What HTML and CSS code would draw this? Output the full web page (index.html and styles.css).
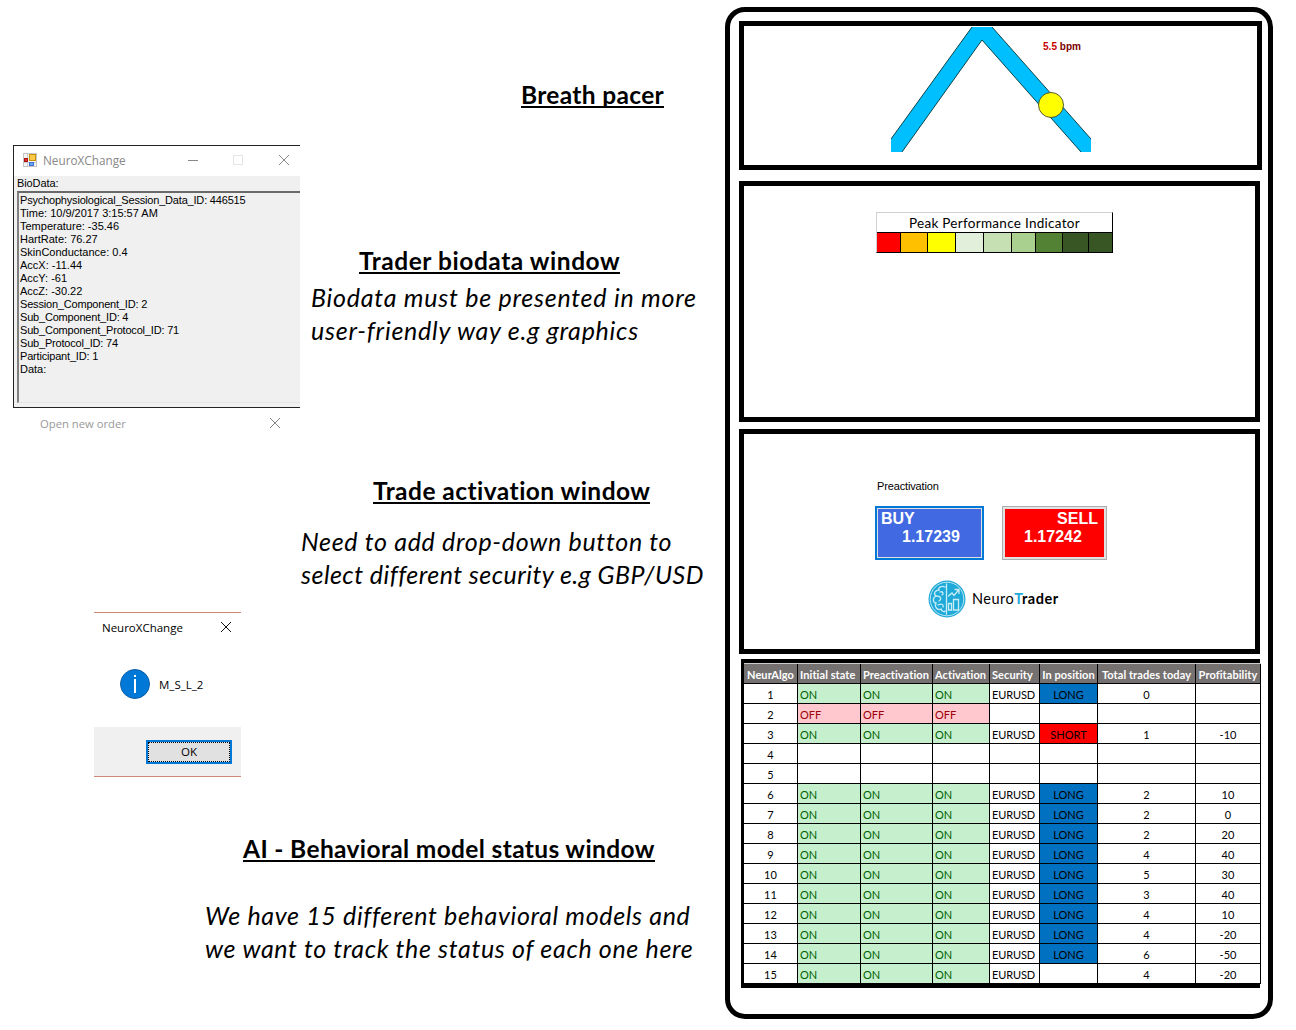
FILE: index.html
```html
<!DOCTYPE html>
<html lang="en">
<head>
<meta charset="utf-8">
<title>NeuroTrader layout</title>
<link rel="stylesheet" href="styles.css">
</head>
<body>
<main class="board">
  <div class="notes">
    <h2 class="title t-breath"><span>Breath pacer</span></h2>

    <section class="bio-row">
      <div class="win">
        <header class="win-bar">
          <svg class="win-icon" width="14" height="14" viewBox="0 0 14 14">
            <rect x="0.5" y="0.5" width="13" height="13" fill="#f4f4f4" stroke="#c4c4c4"/>
            <path d="M4.500 1V13M1 9.500H13" stroke="#ccc"/>
            <rect x="6.500" y="1.500" width="6" height="6" fill="#fdc94a" stroke="#c8920b"/>
            <rect x="1.500" y="5.500" width="3" height="3" fill="#d33" stroke="#a11"/>
            <rect x="6.500" y="9.500" width="4" height="3" fill="#6aa5f5" stroke="#3a72d0"/>
          </svg>
          <span class="win-name">NeuroXChange</span>
          <svg class="win-ctl" width="104" height="12" viewBox="0 0 104 12" fill="none">
            <path d="M1 6.500H11" stroke="#888"/>
            <rect x="46.500" y="1.500" width="9" height="9" stroke="#e4e4e4"/>
            <path d="M92 1L102 11M102 1L92 11" stroke="#888"/>
          </svg>
        </header>
        <div class="bio-label">BioData:</div>
        <div class="bio-box">
          <div class="key">Psychophysiological_Session_Data_ID: 446515</div>
          <div>Time: 10/9/2017 3:15:57 AM</div>
          <div>Temperature: -35.46</div>
          <div>HartRate: 76.27</div>
          <div>SkinConductance: 0.4</div>
          <div>AccX: -11.44</div>
          <div>AccY: -61</div>
          <div>AccZ: -30.22</div>
          <div class="key">Session_Component_ID: 2</div>
          <div class="key">Sub_Component_ID: 4</div>
          <div class="key">Sub_Component_Protocol_ID: 71</div>
          <div class="key">Sub_Protocol_ID: 74</div>
          <div class="key">Participant_ID: 1</div>
          <div>Data:</div>
        </div>
      </div>
      <div class="bio-notes">
        <h2 class="title t-bio"><span>Trader biodata window</span></h2>
        <p class="remark r-bio">Biodata must be presented in more<br>user-friendly way e.g graphics</p>
      </div>
    </section>

    <div class="order-bar">
      <span>Open new order</span>
      <svg width="12" height="12" viewBox="0 0 12 12"><path d="M1 1L11 11M11 1L1 11" stroke="#888" fill="none"/></svg>
    </div>

    <h2 class="title t-trade"><span>Trade activation window</span></h2>
    <p class="remark r-trade">Need to add drop-down button to<br><span class="tight">select different security e.g GBP/USD</span></p>

    <div class="dialog">
      <header class="dialog-bar">
        <span>NeuroXChange</span>
        <svg width="12" height="12" viewBox="0 0 12 12"><path d="M1 1L11 11M11 1L1 11" stroke="#111" fill="none"/></svg>
      </header>
      <div class="dialog-body">
        <svg width="30" height="30" viewBox="0 0 30 30">
          <circle cx="15" cy="15" r="14.500" fill="#0078d7" stroke="#0d5fa5"/>
          <path d="M14 6H16V8H14ZM14 10H16V24H14Z" fill="#fff"/>
        </svg>
        <span>M_S_L_2</span>
      </div>
      <footer class="dialog-foot"><button class="ok">OK</button></footer>
    </div>

    <h2 class="title t-ai"><span>AI - Behavioral model status window</span></h2>
    <p class="remark r-ai">We have 15 different behavioral models and<br>we want to track the status of each one here</p>
  </div>

  <aside class="frame">
    <section class="panel pacer">
      <svg width="200" height="126" viewBox="0 0 200 126">
        <path d="M81 0H101L200 112V125H190L91 13L11 125H0V112Z" fill="#00bfff"/>
        <path d="M81 0L0 112M101 0L200 112M190 125L91 13L11 125" fill="none" stroke="#033" stroke-width="0.900"/>
        <circle cx="160" cy="78" r="12.500" fill="#ff0" stroke="#332" stroke-width="0.800"/>
        <text x="152" y="23" class="bpm" textLength="38" lengthAdjust="spacingAndGlyphs">5.5 <tspan class="unit">bpm</tspan></text>
      </svg>
    </section>

    <section class="panel peak">
      <div class="ppi">
        <div class="ppi-name"><span>Peak Performance Indicator</span></div>
        <div class="ppi-scale"><i class="c1"></i><i class="c2"></i><i class="c3"></i><i class="c4"></i><i class="c5"></i><i class="c6"></i><i class="c7"></i><i class="c8"></i><i class="c8"></i></div>
      </div>
    </section>

    <section class="panel trade">
      <div class="state">Preactivation</div>
      <div class="quotes">
        <button class="quote buy"><span class="side">BUY</span><span class="price">1.17239</span></button>
        <button class="quote sell"><span class="side">SELL</span><span class="price">1.17242</span></button>
      </div>
      <div class="brand">
        <svg width="38" height="38" viewBox="0 0 38 38" fill="none">
          <circle cx="19" cy="19" r="18.500" fill="#1fa9d8"/>
          <circle cx="19" cy="19" r="16.800" stroke="#c8edf6" stroke-width="0.900"/>
          <g stroke="#c8edf6" stroke-width="1.300" stroke-linecap="round">
            <path d="M18.500 4V34M17 7C13 5 10 8 11 10C7 10 5 14 8 16C4 18 5 23 8 23C6 27 10 31 13 29C14 32 17 32 17 31"/>
            <path d="M12 12C15 11 16 14 14 15M8 16C13 16 14 19 11 21M10 25C14 23 16 25 15 27"/>
            <path d="M20.500 16L24 13L26 15.500L31 9.500M27 9.500H31V13.500"/>
            <path d="M20.500 30V23.500H23.500V30ZM25.500 30V19.500H30.500V30Z"/>
          </g>
        </svg>
        <span class="brand-name">Neuro<b><em>T</em>rader</b></span>
      </div>
    </section>

    <section class="status">
      <table>
        <colgroup><col class="w1"><col class="w2"><col class="w3"><col class="w4"><col class="w5"><col class="w6"><col class="w7"><col class="w8"></colgroup>
        <thead><tr><th>NeurAlgo</th><th class="lead">Initial state</th><th class="lead">Preactivation</th><th class="lead">Activation</th><th class="lead">Security</th><th>In position</th><th>Total trades today</th><th>Profitability</th></tr></thead>
        <tbody>
          <tr><td>1</td><td class="on">ON</td><td class="on">ON</td><td class="on">ON</td><td class="sec">EURUSD</td><td class="long">LONG</td><td>0</td><td></td></tr>
          <tr><td>2</td><td class="off">OFF</td><td class="off">OFF</td><td class="off">OFF</td><td></td><td></td><td></td><td></td></tr>
          <tr><td>3</td><td class="on">ON</td><td class="on">ON</td><td class="on">ON</td><td class="sec">EURUSD</td><td class="short">SHORT</td><td>1</td><td>-10</td></tr>
          <tr><td>4</td><td></td><td></td><td></td><td></td><td></td><td></td><td></td></tr>
          <tr><td>5</td><td></td><td></td><td></td><td></td><td></td><td></td><td></td></tr>
          <tr><td>6</td><td class="on">ON</td><td class="on">ON</td><td class="on">ON</td><td class="sec">EURUSD</td><td class="long">LONG</td><td>2</td><td>10</td></tr>
          <tr><td>7</td><td class="on">ON</td><td class="on">ON</td><td class="on">ON</td><td class="sec">EURUSD</td><td class="long">LONG</td><td>2</td><td>0</td></tr>
          <tr><td>8</td><td class="on">ON</td><td class="on">ON</td><td class="on">ON</td><td class="sec">EURUSD</td><td class="long">LONG</td><td>2</td><td>20</td></tr>
          <tr><td>9</td><td class="on">ON</td><td class="on">ON</td><td class="on">ON</td><td class="sec">EURUSD</td><td class="long">LONG</td><td>4</td><td>40</td></tr>
          <tr><td>10</td><td class="on">ON</td><td class="on">ON</td><td class="on">ON</td><td class="sec">EURUSD</td><td class="long">LONG</td><td>5</td><td>30</td></tr>
          <tr><td>11</td><td class="on">ON</td><td class="on">ON</td><td class="on">ON</td><td class="sec">EURUSD</td><td class="long">LONG</td><td>3</td><td>40</td></tr>
          <tr><td>12</td><td class="on">ON</td><td class="on">ON</td><td class="on">ON</td><td class="sec">EURUSD</td><td class="long">LONG</td><td>4</td><td>10</td></tr>
          <tr><td>13</td><td class="on">ON</td><td class="on">ON</td><td class="on">ON</td><td class="sec">EURUSD</td><td class="long">LONG</td><td>4</td><td>-20</td></tr>
          <tr><td>14</td><td class="on">ON</td><td class="on">ON</td><td class="on">ON</td><td class="sec">EURUSD</td><td class="long">LONG</td><td>6</td><td>-50</td></tr>
          <tr><td>15</td><td class="on">ON</td><td class="on">ON</td><td class="on">ON</td><td class="sec">EURUSD</td><td></td><td>4</td><td>-20</td></tr>
        </tbody>
      </table>
    </section>
  </aside>
</main>
</body>
</html>
```
FILE: styles.css
```css
* { box-sizing: border-box; }
body { margin: 0; background: #fff; color: #000; font-family: "Lato", sans-serif; font-variant-ligatures: none; }
.board { display: flex; width: 1296px; height: 1030px; overflow: hidden; }
.notes { width: 725px; flex: none; display: flex; flex-direction: column; align-items: flex-start; }
h2, p { margin: 0; white-space: nowrap; }

/* Headings and remarks */
.title { height: 32px; line-height: 32px; font-size: 24.5px; font-weight: 700; letter-spacing: 0.33px; }
.title span { display: inline-block; height: 28px; line-height: 30px; border-bottom: 2px solid #000; }
.remark { font-size: 25px; line-height: 33px; font-style: italic; letter-spacing: 0.7px; }
.tight { letter-spacing: 0.46px; }
.t-breath { margin: 79px 0 0 521px; }
.t-trade { margin: 35px 0 0 373px; letter-spacing: 0.46px; }
.r-trade { margin: 18px 0 0 301px; }
.t-ai { margin: 56px 0 0 243px; letter-spacing: 0.36px; }
.r-ai { margin: 34px 0 0 205px; letter-spacing: 0.66px; }

/* Bio data window */
.bio-row { display: flex; margin-top: 34px; height: 263px; }
.win { width: 287px; height: 263px; margin-left: 13px; border: 1px solid #222; border-right: 0; background: #f0f0f0; display: flex; flex-direction: column; font: 11px/13px "Liberation Sans", sans-serif; }
.win-bar { height: 30px; background: #fff; display: flex; align-items: center; padding: 0 0 2px 9px; color: #888; font: 11.750px "Open Sans", sans-serif; }
.win-name { margin-left: 6px; width: 144px; flex: none; }
.win-ctl { flex: none; }
.bio-label { height: 15px; padding: 1px 0 0 3px; letter-spacing: -0.1px; }
.bio-box { margin-left: 3px; height: 212px; padding: 1px 0 0 1px; border: 2px solid #696969; border-left-color: #808080; border-right: 0; border-bottom: 1px solid #e3e3e3; white-space: nowrap; }
.key { letter-spacing: -0.19px; }
.bio-notes { padding-left: 11px; }
.t-bio { margin: 100px 0 0 48px; letter-spacing: 0.55px; }
.r-bio { margin-top: 4px; letter-spacing: 0.75px; }

.order-bar { display: flex; align-items: center; height: 32px; padding-bottom: 2px; margin-left: 40px; width: 241px; justify-content: space-between; color: #999; font: 11.250px "Open Sans", sans-serif; }

/* Message box */
.dialog { width: 147px; height: 165px; margin: 21px 0 0 94px; border-top: 1px solid #d08878; border-bottom: 1px solid #d08878; display: flex; flex-direction: column; font: 11.500px "Open Sans", sans-serif; }
.dialog-bar { height: 28px; display: flex; align-items: center; justify-content: space-between; padding: 0 9px 0 8px; }
.dialog-body { height: 86px; display: flex; align-items: center; gap: 9px; padding-left: 26px; }
.dialog-foot { flex: 1; background: #f0f0f0; padding: 13px 9px 0 52px; }
.ok { display: block; width: 86px; height: 24px; padding: 0 0 1px; border: 2px solid #0078d7; background: #e1e1e1; outline: 1px dotted #000; outline-offset: -3px; font: 11.500px "Open Sans", sans-serif; }

/* Right-hand mock-up frame */
.frame { width: 548px; height: 1012px; margin-top: 7px; border: 5px solid #000; border-radius: 20px; padding: 9px 0 0 9px; flex: none; }
.panel { border: 5px solid #000; width: 521px; }
.pacer { width: 523px; height: 149px; padding: 1px 0 0 147px; }
.pacer svg { display: block; }
.bpm { font: bold 11px "Liberation Sans", sans-serif; fill: #c80000; }
.unit { fill: #7a0000; }
.peak { height: 241px; margin-top: 11px; padding: 26px 0 0 132px; }
.ppi { width: 237px; height: 41px; border: 1px solid #d0d0d0; border-right-color: #000; border-bottom-color: #000; }
.ppi-name { height: 20px; border-bottom: 1px solid #000; text-align: center; font-size: 13.5px; line-height: 21px; letter-spacing: 0.29px; white-space: nowrap; }
.ppi-scale { display: grid; grid-template-columns: 24px 27px 28px 28px 28px 24px 27px 26px 23px; height: 19px; }
.ppi-scale i { border-right: 1px solid #000; }
.ppi-scale i:last-child { border-right: 0; }
.c1 { background: #f00; } .c2 { background: #ffc000; } .c3 { background: #ff0; } .c4 { background: #e2efda; }
.c5 { background: #c6e0b4; } .c6 { background: #a9d08e; } .c7 { background: #548235; } .c8 { background: #375623; }

.trade { height: 225px; margin-top: 7px; padding: 46px 0 0 131px; }
.state { font: 11px/13px "Liberation Sans", sans-serif; padding-left: 2px; letter-spacing: -0.15px; }
.quotes { display: flex; gap: 18px; margin-top: 13px; }
.quote { height: 54px; display: flex; flex-direction: column; align-items: flex-start; color: #fff; font: bold 16px/18px "Liberation Sans", sans-serif; }
.buy { width: 109px; background: #4169e1; border: 2px solid #0078d7; box-shadow: inset 0 0 0 1px #e1e1e1; padding: 2px 3px 0 4px; }
.sell { width: 105px; background: #f00; border: 1px solid #adadad; box-shadow: inset 0 0 0 2px #e1e1e1; padding: 3px 8px 0; }
.buy .price { margin-left: 21px; }
.sell .side { align-self: flex-end; }
.sell .price { margin-left: 13px; }
.brand { display: flex; align-items: center; gap: 6px; margin: 20px 0 0 53px; }
.brand-name { font-size: 14.5px; letter-spacing: 0.5px; padding-bottom: 1px; }
.brand-name em { font-style: normal; color: #1fa9d8; }

.status { margin: 5px 0 0 2px; width: 519px; height: 329px; border: solid #000; border-width: 4px 0 5px 3px; }
table { border-collapse: separate; border-spacing: 0; table-layout: fixed; width: 517px; border-top: 1px solid #ccc; font-size: 11px; }
.w1 { width: 54px; } .w2 { width: 63px; } .w3 { width: 72px; } .w4 { width: 57px; }
.w5 { width: 50px; } .w6 { width: 58px; } .w7 { width: 98px; } .w8 { width: 65px; }
th, td { height: 20px; padding: 2px 0 0; line-height: 17px; border: solid #000; border-width: 0 1px 1px 0; text-align: center; white-space: nowrap; }
th { background: #757171; color: #fff; font-weight: 700; letter-spacing: 0.08px; }
th.lead { text-align: left; padding-left: 2px; }
.on, .off, .sec { text-align: left; padding-left: 2px; }
.sec { letter-spacing: -0.1px; }
.on { background: #c6efce; color: #006100; }
.off { background: #ffc7ce; color: #9c0006; }
.long { background: #0070c0; }
.short { background: #f00; }
```
